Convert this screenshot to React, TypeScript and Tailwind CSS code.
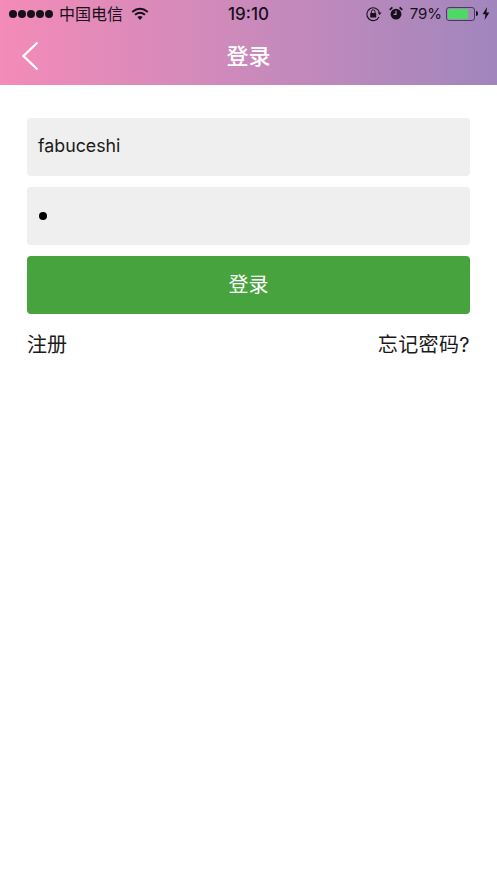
const FONT = "font-['Inter','Noto_Sans_CJK_SC',sans-serif]";

function Wifi() {
  return (
    <svg width="18" height="14" viewBox="0 0 18 14" className="ml-[8px]">
      <path d="M1.2 5 Q9 -1.4 16.8 5" fill="none" stroke="#17101a" strokeWidth="1.9" />
      <path d="M4 7.8 Q9 3.6 14 7.8" fill="none" stroke="#17101a" strokeWidth="1.9" />
      <path d="M6.4 10.1 Q9 8 11.6 10.1 L9 13 Z" fill="#17101a" />
    </svg>
  );
}

function RotationLock() {
  return (
    <svg width="17" height="16" viewBox="0 0 17 16">
      <path d="M14 11 A6.4 6.4 0 1 1 14.4 6.5" fill="none" stroke="#17101a" strokeWidth="1.1" />
      <path d="M12.6 6.4 L16.6 6.4 L14.6 9 Z" fill="#17101a" />
      <rect x="5.2" y="7" width="6" height="4.6" rx="0.7" fill="#17101a" />
      <path d="M6.4 7 V5.6 A1.8 1.8 0 0 1 10 5.6 V7" fill="none" stroke="#17101a" strokeWidth="1" />
    </svg>
  );
}

function Alarm() {
  return (
    <svg width="14" height="15" viewBox="0 0 15 15">
      <circle cx="7.5" cy="8.2" r="5.8" fill="#17101a" />
      <path d="M7.5 4.6 V8.4 H5" fill="none" stroke="#c08cbc" strokeWidth="1.2" />
      <path d="M0.8 3.6 L3.6 1 M14.2 3.6 L11.4 1" stroke="#17101a" strokeWidth="1.8" />
    </svg>
  );
}

function StatusBar() {
  return (
    <div className="relative flex h-[27px] items-center justify-between pl-[9px] pr-[7px] text-[#17101a]">
      <div className="flex items-center">
        <div className="flex gap-[1px]">
          {[0, 1, 2, 3, 4].map((i) => (
            <span key={i} className="h-[8px] w-[8px] rounded-full bg-[#17101a]" />
          ))}
        </div>
        <span className="ml-[6px] text-[16px] leading-[20px]">中国电信</span>
        <Wifi />
      </div>
      <span className="absolute left-0 right-0 text-center text-[17px] font-medium leading-[20px]">19:10</span>
      <div className="flex items-center">
        <RotationLock />
        <span className="ml-[7px] flex"><Alarm /></span>
        <span className="ml-[7px] text-[15px] leading-[20px]">79%</span>
        <div className="ml-[4px] flex h-[14px] w-[29px] items-center rounded-[3px] border border-[#4b3a55] p-[1px]">
          <div className="h-full w-[78%] rounded-[1px] bg-[#4cd964]" />
        </div>
        <span className="ml-[1px] h-[5px] w-[2px] rounded-r-sm bg-[#17101a]" />
        <svg width="8" height="13" viewBox="0 0 8 13" className="ml-[4px]">
          <path d="M5 0 L0.6 7.2 H3.4 L2.6 13 L7.4 5.4 H4.4 Z" fill="#17101a" />
        </svg>
      </div>
    </div>
  );
}

function Header() {
  return (
    <div className="h-[85px] bg-gradient-to-r from-[#f48bb8] to-[#a086bd]">
      <StatusBar />
      <div className="relative flex h-[58px] items-center justify-center">
        <svg width="18" height="30" viewBox="0 0 18 30" className="absolute left-[21px] top-[14px]">
          <path d="M16.5 1.5 L2.5 15 L16.5 28.5" fill="none" stroke="white" strokeWidth="2.3" />
        </svg>
        <span className="text-[22px] font-medium leading-[30px] text-white">登录</span>
      </div>
    </div>
  );
}

export default function App() {
  return (
    <div className={`h-[883px] w-[497px] bg-white ${FONT}`}>
      <Header />
      <div className="flex flex-col gap-[11px] px-[27px] pt-[33px]">
        <div className="flex h-[58px] items-center rounded-[4px] bg-[#efefef] px-[11px] pb-[2px] text-[17.8px] text-[#1a1a1a]">
          fabuceshi
        </div>
        <div className="flex h-[58px] items-center rounded-[4px] bg-[#efefef] px-[12px]">
          <span className="h-[8px] w-[8px] rounded-full bg-black" />
        </div>
        <div className="flex h-[58px] items-center justify-center rounded-[4px] bg-[#47a33e] text-[20px] text-white">
          登录
        </div>
      </div>
      <div className="flex items-center justify-between px-[27px] pt-[17px] text-[20px] leading-[28px] text-[#1a1a1a]">
        <span>注册</span>
        <span className="tracking-[0.4px]">忘记密码?</span>
      </div>
    </div>
  );
}
